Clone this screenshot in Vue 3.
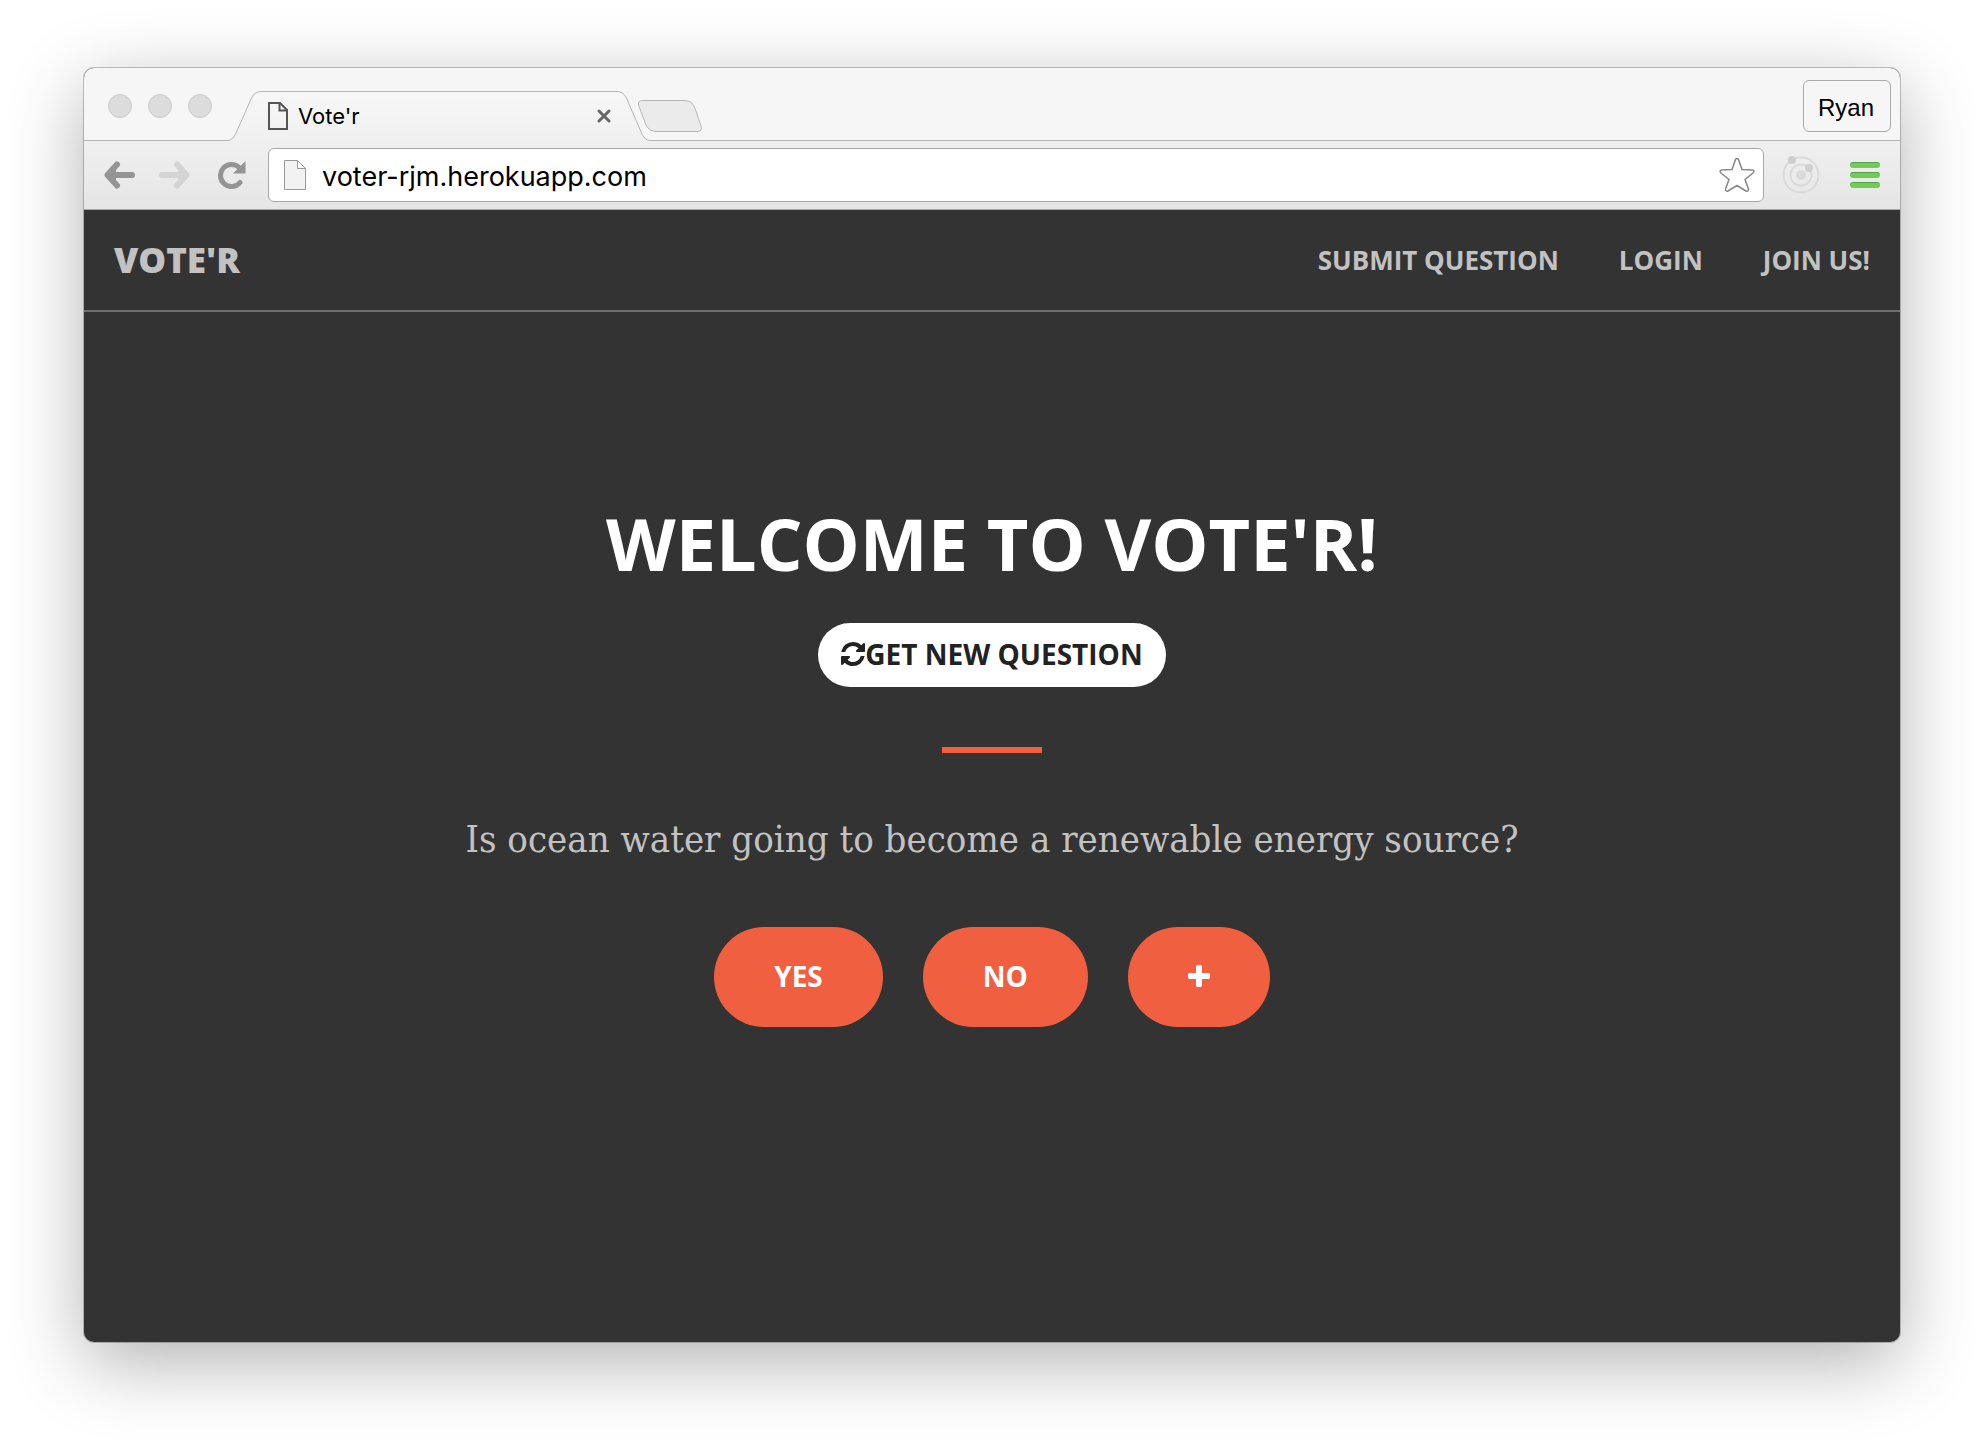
<script setup>
import { ref } from 'vue'

const address = ref('voter-rjm.herokuapp.com')
const links = ['Submit question', 'Login', 'Join us!']
</script>

<template>
  <div class="desktop">
    <div class="window">
      <div class="tabstrip">
        <div class="lights"><i></i><i></i><i></i></div>
        <div class="tab">
          <svg class="tab-shape" width="424" height="50" viewBox="0 0 424 50" aria-hidden="true">
            <defs>
              <linearGradient id="tabFill" x1="0" y1="0" x2="0" y2="1">
                <stop offset="0" stop-color="#f7f7f7" />
                <stop offset="1" stop-color="#f0f0f0" />
              </linearGradient>
            </defs>
            <path d="M0 49.500Q5 49 8 42L24 6Q27 .5 34 .5H388Q395 .5 398 6L414 43Q417 49.500 422 49.500V50H0Z" fill="url(#tabFill)" />
            <path d="M0 49.500Q5 49 8 42L24 6Q27 .5 34 .5H388Q395 .5 398 6L414 43Q417 49.500 422 49.500" fill="none" stroke="#b4b4b4" />
          </svg>
          <svg class="tab-icon" width="20" height="28" viewBox="0 0 20 28" fill="none" stroke="#555" stroke-width="2" aria-hidden="true">
            <path d="M1 1H12L19 8V27H1Z" />
            <path d="M11.500 1V8.500H19" />
          </svg>
          <span class="tab-title">Vote'r</span>
          <button class="tab-close" aria-label="Close tab">
            <svg width="14" height="14" viewBox="0 0 14 14" stroke="#666" stroke-width="3" stroke-linecap="round"><path d="M2 2L12 12M12 2L2 12" /></svg>
          </button>
        </div>
        <button class="new-tab" aria-label="New tab">
          <svg width="66" height="34" viewBox="0 0 66 34"><path d="M5 1.500H47Q55 1.500 57.500 8L64 27Q65.500 32 61 32.500H20Q12 32.500 9 26L1.500 6Q1 1.500 5 1.500Z" fill="#ebebeb" stroke="#b8b8b8" /></svg>
        </button>
        <button class="profile">Ryan</button>
      </div>

      <div class="toolbar">
        <button aria-label="Back">
          <svg width="32" height="28" viewBox="0 0 32 28" fill="none" stroke="#949494" stroke-width="6" stroke-linecap="round" stroke-linejoin="round"><path d="M5 14H28M13 3.500L3.500 14L13 24.500" /><path d="M5 14L12 7V21Z" fill="#949494" stroke="none" /></svg>
        </button>
        <button class="forward" aria-label="Forward">
          <svg width="32" height="28" viewBox="0 0 32 28" fill="none" stroke="#d4d4d4" stroke-width="6" stroke-linecap="round" stroke-linejoin="round"><path d="M4 14H27M19 3.500L28.500 14L19 24.500" /><path d="M27 14L20 7V21Z" fill="#d4d4d4" stroke="none" /></svg>
        </button>
        <button class="reload" aria-label="Reload">
          <svg width="28" height="28" viewBox="0 0 28 28"><path d="M21 6.500A11 11 0 1 0 22 21.500" fill="none" stroke="#949494" stroke-width="5" stroke-linecap="round" /><path d="M27.500 0V12.500H15Z" fill="#949494" /></svg>
        </button>
        <div class="omnibox">
          <svg width="24" height="32" viewBox="0 0 24 32" aria-hidden="true">
            <path d="M1.500 1.500H14.500L22.500 9.500V30.500H1.500Z" fill="#f2f2f2" stroke="#999" />
            <path d="M14.500 1.500V9.500H22.500Z" fill="#fff" stroke="#999" />
          </svg>
          <input v-model="address" type="text" aria-label="Address" />
          <button aria-label="Bookmark this page">
            <svg width="36" height="36" viewBox="0 0 36 36" fill="#fff" stroke="#8a8a8a" stroke-width="1.600" stroke-linejoin="round"><path d="M16.500 2.500Q18 .5 19.500 2.500L23 12.500L33.500 13Q36 14 34 16L26 22.500L29.500 32Q29.500 35 27 34L18 28.500L9 34Q6.500 35 6.500 32L10 22.500L2 16Q0 14 2.500 13L13 12.500Z" /></svg>
          </button>
        </div>
        <button class="orbit" aria-label="Extension">
          <svg width="38" height="38" viewBox="0 0 38 38" fill="none" stroke="#dadada" stroke-width="2"><circle cx="19" cy="19" r="17.500" /><circle cx="19" cy="19" r="10.500" /><g fill="#cecece" stroke="none"><circle cx="19" cy="19" r="5" fill="#dadada" /><circle cx="10" cy="4" r="4" /><circle cx="27" cy="12" r="4" /></g></svg>
        </button>
        <button class="menu" aria-label="Menu"><i></i><i></i><i></i></button>
      </div>

      <div class="page">
        <nav>
          <a class="brand" href="#">Vote'r</a>
          <a v-for="link in links" :key="link" href="#">{{ link }}</a>
        </nav>
        <main>
          <h1>Welcome to Vote'r!</h1>
          <button class="refresh">
            <svg width="24" height="24" viewBox="0 0 1536 1536" fill="currentColor" aria-hidden="true"><path d="M1511 928q0 5-1 7-64 268-268 434.500t-478 166.500q-146 0-282.500-55t-243.500-157l-129 129q-19 19-45 19t-45-19-19-45v-448q0-26 19-45t45-19h448q26 0 45 19t19 45-19 45l-137 137q71 66 161 102t187 36q134 0 250-65t186-179q11-17 53-117 8-23 30-23h192q13 0 22.500 9.500t9.500 22.500zm25-800v448q0 26-19 45t-45 19h-448q-26 0-45-19t-19-45 19-45l138-138q-148-137-349-137-134 0-250 65t-186 179q-11 17-53 117-8 23-30 23h-199q-13 0-22.500-9.500t-9.500-22.500v-7q65-268 270-434.500t480-166.500q146 0 284 55.500t245 156.500l130-129q19-19 45-19t45 19 19 45z" /></svg>
            <span>Get new question</span>
          </button>
          <hr />
          <p>Is ocean water going to become a renewable energy source?</p>
          <div class="answers">
            <button>Yes</button>
            <button>No</button>
            <button aria-label="Add answer">
              <svg width="22" height="22" viewBox="192 128 1408 1408" fill="currentColor"><path d="M1600 736v192q0 40-28 68t-68 28h-416v416q0 40-28 68t-68 28h-192q-40 0-68-28t-28-68v-416h-416q-40 0-68-28t-28-68v-192q0-40 28-68t68-28h416v-416q0-40 28-68t68-28h192q40 0 68 28t28 68v416h416q40 0 68 28t28 68z" /></svg>
            </button>
          </div>
        </main>
      </div>
    </div>
  </div>
</template>

<style>
body {
  margin: 0;
  background: #fff;
}
</style>

<style scoped>
* {
  box-sizing: border-box;
}
button {
  margin: 0;
  padding: 0;
  border: 0;
  background: none;
  color: inherit;
  cursor: pointer;
}
svg {
  display: block;
  flex: none;
}
.desktop {
  display: flex;
  min-height: 100vh;
  padding: 68px 84px 100px;
  overflow: hidden;
}
.window {
  flex: 1;
  display: flex;
  flex-direction: column;
  border-radius: 10px;
  background: #333;
  box-shadow: 0 0 0 1px rgba(0, 0, 0, 0.22), 0 20px 76px rgba(0, 0, 0, 0.31);
}
.tabstrip {
  display: flex;
  height: 73px;
  padding: 0 9px 0 24px;
  border-bottom: 1px solid #b4b4b4;
  border-radius: 10px 10px 0 0;
  background: #f6f6f6;
}
.lights {
  display: flex;
  gap: 16px;
  padding-top: 26px;
}
.lights i {
  width: 24px;
  height: 24px;
  border: 1px solid #ccc;
  border-radius: 50%;
  background: #dcdcdc;
}
.tab {
  position: relative;
  display: flex;
  align-items: center;
  width: 424px;
  height: 50px;
  margin: 23px 0 0 16px;
  padding: 0 41px 0 40px;
  font: 22px/28px Inter, "Liberation Sans", sans-serif;
  color: #000;
}
.tab-shape {
  position: absolute;
  inset: 0;
}
.tab-icon,
.tab-title,
.tab-close {
  position: relative;
}
.tab-title {
  flex: 1;
  padding-left: 10px;
}
.new-tab {
  align-self: flex-start;
  margin: 31px auto 0 -15px;
  position: relative;
}
.profile {
  width: 88px;
  height: 52px;
  margin-top: 12px;
  padding: 4px 2px 0 0;
  border: 1px solid #aaa;
  border-radius: 6px;
  font: 24px/32px "Liberation Sans", sans-serif;
  color: #000;
}
.toolbar {
  display: flex;
  align-items: center;
  height: 69px;
  padding: 0 20px;
  border-bottom: 1px solid #aaa;
  background: linear-gradient(#f0f0f0, #e5e5e5);
}
.forward {
  margin-left: 22px;
}
.reload {
  margin: 0 22px 0 28px;
}
.omnibox {
  flex: 1;
  display: flex;
  align-items: center;
  height: 54px;
  padding: 0 8px 0 14px;
  border: 1px solid #a8a8a8;
  border-radius: 6px;
  background: #fff;
}
.omnibox input {
  flex: 1;
  min-width: 0;
  padding: 4px 0 0 15px;
  border: 0;
  outline: 0;
  background: none;
  font: 27px/36px Inter, "Liberation Sans", sans-serif;
  color: #000;
}
.orbit {
  margin: 0 30px 0 18px;
}
.menu {
  display: grid;
  gap: 4px;
}
.menu i {
  width: 30px;
  height: 6px;
  border-top: 1px solid #4fa548;
  border-radius: 3px;
  background: #74cb53;
}
.page {
  flex: 1;
  font-family: "Open Sans", sans-serif;
}
nav {
  display: flex;
  align-items: center;
  gap: 60px;
  height: 102px;
  padding: 0 30px;
  border-bottom: 2px solid #707070;
}
nav a {
  font-size: 26px;
  line-height: 40px;
  font-weight: 700;
  text-transform: uppercase;
  text-decoration: none;
  color: #c2c2c2;
}
nav .brand {
  margin-right: auto;
  font-size: 35px;
  font-weight: 800;
}
main {
  display: flex;
  flex-direction: column;
  align-items: center;
  padding: 191px 32px 64px;
  text-align: center;
  text-transform: uppercase;
}
h1 {
  margin: 0;
  font-size: 72px;
  line-height: 80px;
  font-weight: 700;
  color: #fff;
}
.refresh {
  display: flex;
  align-items: center;
  height: 64px;
  margin-top: 40px;
  padding: 0 23px 2px;
  border-radius: 32px;
  background: #fff;
  color: #222;
  font: 700 28px/40px "Open Sans", sans-serif;
  text-transform: uppercase;
}
hr {
  width: 100px;
  height: 6px;
  margin: 60px 0;
  border: 0;
  background: #f05f40;
}
p {
  margin: 0;
  font: 38px/52px "DejaVu Serif Condensed", "DejaVu Serif", serif;
  text-transform: none;
  color: #c2c2c2;
}
.answers {
  display: flex;
  gap: 40px;
  margin-top: 62px;
}
.answers button {
  display: flex;
  align-items: center;
  height: 100px;
  padding: 0 60px 2px;
  border-radius: 50px;
  background: #f05f40;
  color: #fff;
  font: 700 28px/40px "Open Sans", sans-serif;
  text-transform: uppercase;
}
</style>
